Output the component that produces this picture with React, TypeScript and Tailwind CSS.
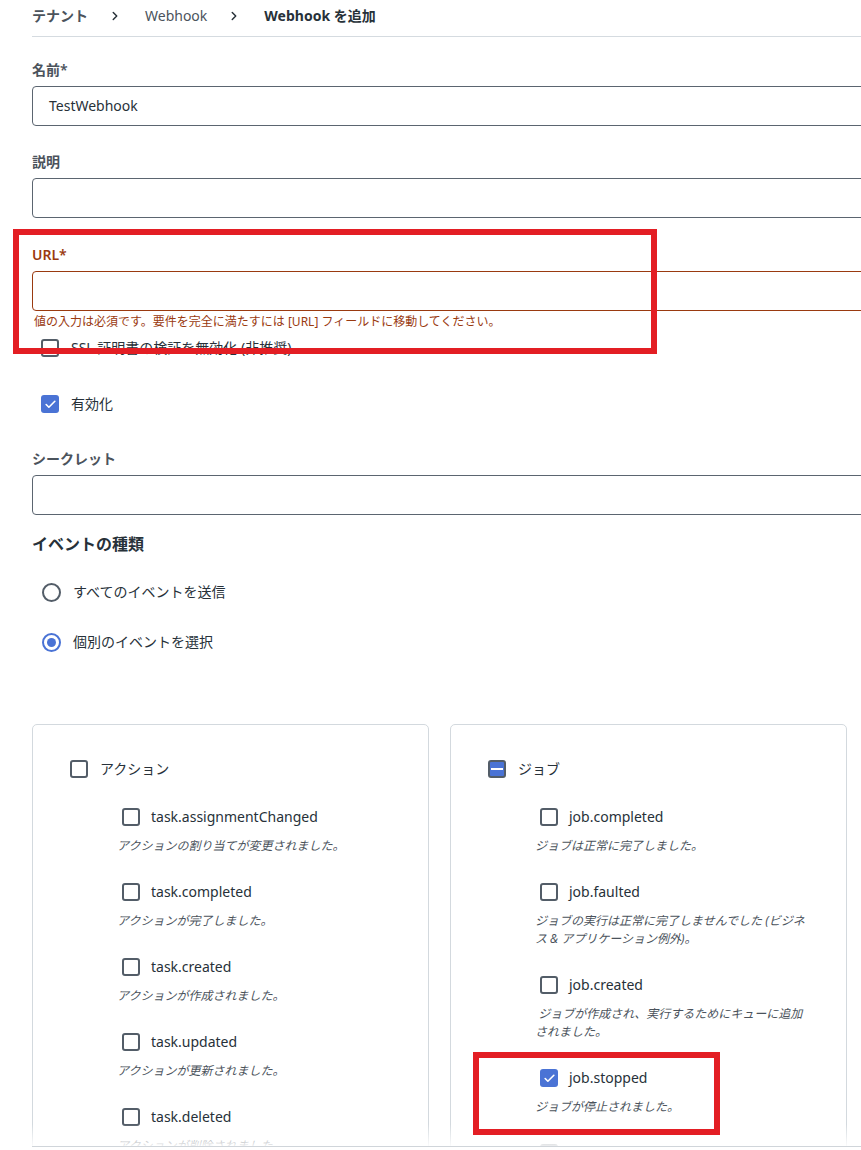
import { Check, ChevronRight } from 'lucide-react';

const FONT = { fontFamily: '"Noto Sans", "Noto Sans CJK JP", sans-serif' };

type EventItem = { name: string; desc: string; checked?: boolean };

const TASK_EVENTS: EventItem[] = [
  { name: 'task.assignmentChanged', desc: 'アクションの割り当てが変更されました。' },
  { name: 'task.completed', desc: 'アクションが完了しました。' },
  { name: 'task.created', desc: 'アクションが作成されました。' },
  { name: 'task.updated', desc: 'アクションが更新されました。' },
  { name: 'task.deleted', desc: 'アクションが削除されました。' },
];

const JOB_EVENTS: EventItem[] = [
  { name: 'job.completed', desc: 'ジョブは正常に完了しました。' },
  {
    name: 'job.faulted',
    desc: 'ジョブの実行は正常に完了しませんでした (ビジネス & アプリケーション例外)。',
  },
  { name: 'job.created', desc: ' ジョブが作成され、実行するためにキューに追加されました。' },
  { name: 'job.stopped', desc: 'ジョブが停止されました。', checked: true },
  { name: 'job.resumed', desc: 'ジョブが再開されました。' },
];

function Box({ state = 'off' }: { state?: 'off' | 'on' | 'mixed' }) {
  if (state === 'on') {
    return (
      <span className="flex size-[18px] shrink-0 items-center justify-center rounded-[3px] bg-[#4a73d5]">
        <Check size={13} strokeWidth={3} className="text-white" />
      </span>
    );
  }
  if (state === 'mixed') {
    return (
      <span className="flex size-[18px] shrink-0 items-center justify-center rounded-[3px] border-2 border-[#535d68] bg-[#4a73d5]">
        <span className="h-[2px] w-[12px] bg-white" />
      </span>
    );
  }
  return <span className="size-[18px] shrink-0 rounded-[3px] border-2 border-[#535d68] bg-white" />;
}

function Field({ label, value, error }: { label: string; value?: string; error?: string }) {
  return (
    <div className="flex flex-col">
      <div
        className={
          error
            ? 'text-sm leading-5 font-semibold text-[#9a3a10]'
            : 'text-sm leading-5 font-semibold text-[#4b535c]'
        }
      >
        {label}
      </div>
      <div
        className={
          error
            ? 'mt-[6px] flex h-[40px] w-[1000px] items-center rounded-[4px] border border-[#9a3a10] px-4 text-sm text-[#273139]'
            : 'mt-[6px] flex h-[40px] w-[1000px] items-center rounded-[4px] border border-[#5b6570] px-4 text-sm text-[#273139]'
        }
      >
        {value}
      </div>
      {error && <div className="mt-[3px] pl-[2px] text-xs leading-4 text-[#9a3a10]">{error}</div>}
    </div>
  );
}

function EventCard({
  title,
  state,
  items,
}: {
  title: string;
  state: 'off' | 'mixed';
  items: EventItem[];
}) {
  return (
    <div className="rounded-[5px] border border-[#d3d9de] pt-[34px] pl-[37px]">
      <div className="flex h-5 items-center gap-3 text-sm text-[#273139]">
        <Box state={state} />
        <span>{title}</span>
      </div>
      <div className="mt-[28px] flex flex-col gap-[27px] pl-[47px]">
        {items.map((item) => (
          <div key={item.name} className="flex flex-col">
            <div className="ml-[5px] flex h-5 items-center gap-[11px] text-sm text-[#273139]">
              <Box state={item.checked ? 'on' : 'off'} />
              <span>{item.name}</span>
            </div>
            <div className="mt-[10px] max-w-[270px] text-xs leading-[18px] whitespace-pre-wrap text-[#4b535c] italic">
              {item.desc}
            </div>
          </div>
        ))}
      </div>
    </div>
  );
}

function Radio({ label, selected }: { label: string; selected?: boolean }) {
  return (
    <div className="flex h-5 items-center gap-3 pl-[10px] text-sm text-[#273139]">
      {selected ? (
        <span className="flex size-[19px] items-center justify-center rounded-full border-2 border-[#4a73d5]">
          <span className="size-[9px] rounded-full bg-[#4a73d5]" />
        </span>
      ) : (
        <span className="size-[19px] rounded-full border-2 border-[#535d68]" />
      )}
      <span>{label}</span>
    </div>
  );
}

export default function App() {
  return (
    <div className="relative h-[1150px] w-[861px] overflow-hidden bg-white" style={FONT}>
      <div className="relative ml-[32px] h-[1147px] overflow-hidden border-b border-[#d0d5da]">
        <div className="flex h-[37px] w-[1000px] items-start border-b border-[#d5dbe0] pt-[6px] text-sm leading-5">
          <span className="font-semibold text-[#4b535c]">テナント</span>
          <ChevronRight size={14} strokeWidth={2.5} className="mt-[3px] mr-[23px] ml-[20px] text-[#273139]" />
          <span className="text-[#4b535c]">Webhook</span>
          <ChevronRight size={14} strokeWidth={2.5} className="mt-[3px] mr-[23px] ml-[20px] text-[#273139]" />
          <span className="font-bold text-[#273139]">Webhook を追加</span>
        </div>

        <div className="mt-[23px] flex flex-col">
          <Field label="名前*" value="TestWebhook" />
          <div className="mt-[26px]">
            <Field label="説明" />
          </div>
          <div className="mt-[27px]">
            <Field
              label="URL*"
              error="値の入力は必須です。要件を完全に満たすには [URL] フィールドに移動してください。"
            />
          </div>

          <div className="mt-[8px] flex h-5 items-center gap-[12px] pl-[9px] text-sm text-[#273139]">
            <Box />
            <span>SSL 証明書の検証を無効化 (非推奨)</span>
          </div>
          <div className="mt-[36px] flex h-5 items-center gap-[12px] pl-[9px] text-sm text-[#273139]">
            <Box state="on" />
            <span>有効化</span>
          </div>

          <div className="mt-[35px]">
            <Field label="シークレット" />
          </div>

          <div className="mt-[17px] text-base leading-6 font-bold text-[#273139]">イベントの種類</div>

          <div className="mt-[26px] flex flex-col gap-[30px]">
            <Radio label="すべてのイベントを送信" />
            <Radio label="個別のイベントを選択" selected />
          </div>

          <div className="mt-[72px] grid w-[815px] grid-cols-2 gap-[21px]">
            <EventCard title="アクション" state="off" items={TASK_EVENTS} />
            <EventCard title="ジョブ" state="mixed" items={JOB_EVENTS} />
          </div>
        </div>

        <div className="pointer-events-none absolute inset-x-0 bottom-0 h-[22px] bg-linear-to-b from-white/0 to-white/90" />
      </div>

      <div className="pointer-events-none absolute top-[229px] left-[13px] h-[125px] w-[644px] border-[6px] border-[#e31e24]" />
      <div className="pointer-events-none absolute top-[1052px] left-[473px] h-[83px] w-[247px] border-[6px] border-[#e31e24]" />
    </div>
  );
}
